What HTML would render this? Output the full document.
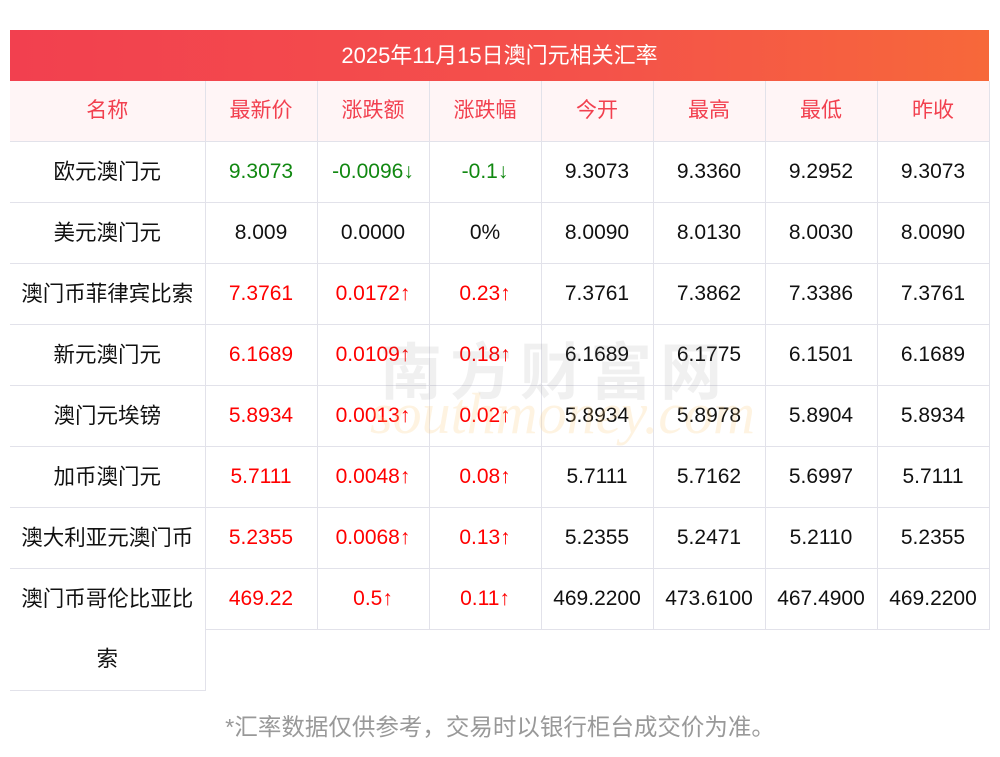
<!DOCTYPE html>
<html><head><meta charset="utf-8"><style>
body{margin:0;background:#fff;width:1000px;height:757px;position:relative;overflow:hidden;font-family:"Liberation Sans","Noto Sans CJK SC",sans-serif;}
.title{position:absolute;left:10px;top:30px;width:979px;height:51px;background:linear-gradient(90deg,#f2404f,#f4524a 60%,#f7683a);color:#fff;font-size:22px;line-height:51px;text-align:center;}
table{position:absolute;left:10px;top:81px;border-collapse:collapse;table-layout:fixed;width:979px;}
td{height:60px;line-height:58px;border-bottom:1px solid #e2e2ea;border-right:1px solid #e2e2ea;text-align:center;font-size:21px;color:#111;padding:0;white-space:nowrap;vertical-align:middle;}
td:first-child{font-size:21.5px;}
tr.h td{background:#fff5f6;color:#f2404f;height:60px;font-size:21px;}
.g{color:#118811}.r{color:#f00}
.foot{position:absolute;left:0;width:1000px;top:708px;text-align:center;color:#999;font-size:23.5px;}
.wm{position:absolute;left:380px;top:322px;font-size:62px;color:rgba(120,120,120,0.11);letter-spacing:8px;font-weight:bold;}
.wm2{position:absolute;left:370px;top:380px;font-size:58px;color:rgba(250,200,120,0.22);font-style:italic;font-family:"Liberation Serif",serif;}
</style></head><body>
<div class="title">2025年11月15日澳门元相关汇率</div>
<table>
<colgroup><col style="width:195px"><col style="width:112px"><col style="width:112px"><col style="width:112px"><col style="width:112px"><col style="width:112px"><col style="width:112px"><col style="width:112px"></colgroup>
<tr class="h"><td>名称</td><td>最新价</td><td>涨跌额</td><td>涨跌幅</td><td>今开</td><td>最高</td><td>最低</td><td>昨收</td></tr>
<tr><td>欧元澳门元</td><td class="g">9.3073</td><td class="g">-0.0096↓</td><td class="g">-0.1↓</td><td>9.3073</td><td>9.3360</td><td>9.2952</td><td>9.3073</td></tr>
<tr><td>美元澳门元</td><td>8.009</td><td>0.0000</td><td>0%</td><td>8.0090</td><td>8.0130</td><td>8.0030</td><td>8.0090</td></tr>
<tr><td>澳门币菲律宾比索</td><td class="r">7.3761</td><td class="r">0.0172↑</td><td class="r">0.23↑</td><td>7.3761</td><td>7.3862</td><td>7.3386</td><td>7.3761</td></tr>
<tr><td>新元澳门元</td><td class="r">6.1689</td><td class="r">0.0109↑</td><td class="r">0.18↑</td><td>6.1689</td><td>6.1775</td><td>6.1501</td><td>6.1689</td></tr>
<tr><td>澳门元埃镑</td><td class="r">5.8934</td><td class="r">0.0013↑</td><td class="r">0.02↑</td><td>5.8934</td><td>5.8978</td><td>5.8904</td><td>5.8934</td></tr>
<tr><td>加币澳门元</td><td class="r">5.7111</td><td class="r">0.0048↑</td><td class="r">0.08↑</td><td>5.7111</td><td>5.7162</td><td>5.6997</td><td>5.7111</td></tr>
<tr><td>澳大利亚元澳门币</td><td class="r">5.2355</td><td class="r">0.0068↑</td><td class="r">0.13↑</td><td>5.2355</td><td>5.2471</td><td>5.2110</td><td>5.2355</td></tr>
<tr><td rowspan="2" style="white-space:normal;line-height:60px;height:121px;vertical-align:top;padding:0 6px">澳门币哥伦比亚比索</td><td class="r">469.22</td><td class="r">0.5↑</td><td class="r">0.11↑</td><td>469.2200</td><td>473.6100</td><td>467.4900</td><td>469.2200</td></tr>
<tr><td colspan="7" style="border:none;border-top:1px solid #e2e2ea;height:60px"></td></tr>
</table>
<div class="wm">南方财富网</div>
<div class="wm2">southmoney.com</div>
<div class="foot">*汇率数据仅供参考，交易时以银行柜台成交价为准。</div>
</body></html>
